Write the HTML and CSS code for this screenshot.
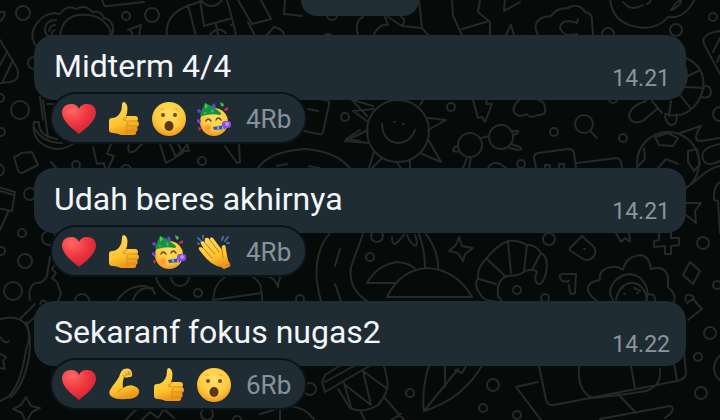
FILE: index.html
```html
<!DOCTYPE html>
<html lang="id">
<head>
<meta charset="utf-8">
<meta name="viewport" content="width=device-width, initial-scale=1">
<title>Chat</title>
<link rel="stylesheet" href="styles.css">
</head>
<body>
<svg class="wallpaper" viewBox="0 0 720 420" preserveAspectRatio="xMidYMid slice" aria-hidden="true">
  <!-- loose bubbles -->
  <g>
    <circle cx="23" cy="13" r="7"/><circle cx="126" cy="16" r="4"/><circle cx="152" cy="15" r="7"/>
    <circle cx="34" cy="63" r="6"/><circle cx="20" cy="110" r="9"/><circle cx="0" cy="98" r="4"/><circle cx="1" cy="132" r="4"/>
    <circle cx="-2" cy="170" r="6"/><circle cx="30" cy="194" r="6"/><circle cx="22" cy="233" r="4"/><circle cx="1" cy="251" r="4"/>
    <circle cx="25" cy="261" r="7"/><circle cx="49" cy="238" r="7"/><circle cx="13" cy="291" r="9"/><circle cx="76" cy="165" r="4"/>
    <circle cx="126" cy="170" r="5"/><circle cx="202" cy="161" r="4"/><circle cx="345" cy="117" r="4"/><circle cx="451" cy="107" r="4"/>
    <circle cx="554" cy="132" r="4"/><circle cx="623" cy="138" r="4"/><circle cx="521" cy="164" r="4"/><circle cx="608" cy="34" r="6"/>
    <circle cx="676" cy="30" r="6"/><circle cx="713" cy="17" r="4"/><circle cx="720" cy="114" r="7"/><circle cx="613" cy="99" r="4"/>
    <circle cx="703" cy="243" r="6"/><circle cx="717" cy="285" r="4"/><circle cx="710" cy="333" r="6"/><circle cx="698" cy="357" r="4"/>
    <circle cx="701" cy="393" r="6"/><circle cx="730" cy="368" r="16"/><circle cx="549" cy="239" r="6"/><circle cx="370" cy="257" r="4"/>
    <circle cx="377" cy="236" r="6"/><circle cx="517" cy="290" r="4"/><circle cx="545" cy="298" r="4"/><circle cx="180" cy="277" r="9"/>
    <circle cx="198" cy="293" r="4"/><circle cx="300" cy="299" r="4"/><circle cx="82" cy="301" r="7"/><circle cx="310" cy="389" r="6"/>
    <circle cx="410" cy="393" r="4"/><circle cx="493" cy="385" r="6"/><circle cx="483" cy="408" r="4"/><circle cx="517" cy="415" r="4"/>
    <circle cx="207" cy="414" r="6"/><circle cx="237" cy="420" r="4"/><circle cx="332" cy="15" r="5"/><circle cx="328" cy="40" r="6"/>
  </g>
  <!-- top strip -->
  <path d="M0 12h5q-1 7-5 9M0 40l17 28q4 12-7 14l-10 1M0 65l7-13M3 81l10-21"/>
  <path d="M36 46q-8-12 2-24 9-11 22-8 7-10 16-5 10-5 16 3 9-2 12 6 12 3 8 18M60 38q1-20 18-23 20-2 28 9 6 6 4 12M56 20q-10 0-11 9 0 8 6 7M49 31q1-6 6-6M52 36q-1-5 3-6"/>
  <path d="M102 0l2 5q1 2 4 1l36-4M128 30l13-5-2 11M133 36l-2-5"/>
  <path d="M167 36q-3-22 23-31l12-4M188 5l8 31M200 0l4 26 28-8-5-18M232 18l4 17M216 24l2 12M200 0q12 12 22 0M210 35q8-10 16-2M231 25h1M238 0l14 24 19-5-10-19M248 22l7 14M266 36l8-9q9 2 10 8M285 0l-1 14 18 2"/>
  <path d="M358 35q-4-14 5-18M385 17l3 8q-8-2-14 9M388 17l14 9q5-7-1-9M402 26l20 2-3-28M422 28l6 7M452 0l1 16 9 19M480 0l-2 12 12 10v13M462 29l27-8M505 0l-1 11 16-9M506 35l5-10 3 10"/>
  <path d="M538 35q-7-13 6-18 8-1 7-1 5-8 17-8 11-6 17 4 8 1 7 10l1 13M577 34q-13 4-17-6 1-9 14-6l3 1 1-4"/>
  <path d="M610-3q1 29 35 31 15-1 23-11 13 2 22-10l5-8M671 10l5-7q7-5 4 1l-6 5zM623 2q8 10 20 3M647 4q4-2 4-5"/>
  <!-- turtle, pizza -->
  <path d="M686 58q20 9 17 31-3 14-14 22-10 7-24 3M678 96q12-14 8-28M688 76l12-6M686 87l18 1M681 96l10 13M671 101l-2 15M652 101l10 12M703 86q8-1 8 6t-10 5M665 116q2 9 7 9t5-11M646 101q-16 5-17 15 2 9 14 5l15-13"/>
  <path d="M720 31q-20 3-16 13l16 30M713 52l7-14M717 62l3-7"/>
  <!-- between first and second message -->
  <path d="M34 122h5q-1 14 18 17M34 122q-3 18 14 25 12 5 25-3M34 127q8 16 28 16M40 97l3 23M43 100l5 38M47 104h8"/>
  <path d="M14 157q6-2 7-4l11-1 6 13-16 8q-3 0-4-3zM51 162l6 7M93 147l4 17 7-1 2 10 8-17-7-2 4-10M129 145q-3 10 6 6l7-7M160 144l6 19 9-5 13-14M170 144l6 13 7-4-5-9M184 151l5 0-2-7M225 146l12 17 3-1-1-18"/>
  <path d="M311 98l15 2q4 1 3 5l-6 27q-1 3-4 2l-15-3M308 109l10 2M258 168q12-17 47-19 30 2 45 19M309 166l10 2M277 166l10-2M360 130l-14 9 14 2"/>
  <circle cx="398" cy="131" r="31"/>
  <path d="M382 124q1 18 16 19 13-1 17-13M394 122h1M403 124h1M367 121l-14-10 21-2M353 100l20 6M368 130l-23 11 24 2M374 152l-5 16M382 158l-10 10M397 163l4 5M410 161v8M420 153l21 9-13-23M428 118l18 2-18 10M420 105l3-5M367 116l-15-16"/>
  <path d="M473 100l5 18 4-1 3 5 7-18h-6l1-4M519 100q-10 10-2 15 5 2 9-1 6 5 11 1 10 1 8-8-1-6-7-7"/>
  <circle cx="470" cy="145" r="12"/><circle cx="501" cy="137" r="12"/>
  <path d="M482 138l7-2M458 146q-5 1-5 5l5 1M467 158l-4 10M471 157l-2 11M513 134q4 2 5-3h-5M511 144l9 3q3 3-2 3l-8-2M488 168q4-7 12-4l6 4"/>
  <circle cx="584" cy="124" r="9"/>
  <path d="M590 131l7 7M536 168l-2-10q0-4 4-5l30-4q5 0 6 4l2 15M577 163l40-5q4 0 5 10M545 168v-3h5v3M559 168v-4h5v4"/>
  <circle cx="668" cy="163" r="31"/>
  <path d="M655 137l4 8 14 1 5-8-10-5zM638 166l7-7-1-11M688 151l9-2 3 15-6 7-6-9zM658 168l8-9 12 5M680 133l21-7q-10 15 0 15l19-3M720 144q-21 4-17 15 3 9 17 2M692 184q16-16 28-18"/>
  <!-- sides of second message -->
  <path d="M-2 187l17 5-3 19-14-3M8 212l-8 18M0 191l14 4"/>
  <path d="M686 203h15l-6 8 1 12-10-8M720 182q-7 4-6 18l4 1 2 32"/>
  <!-- between second and third message -->
  <path d="M30 300q-3-12 5-17 8 1 12-7l3-19q2-1 2 0M56 263l-4 6 4 4-4 5 5 4 4 12-3 7M40 304q2-6 6-2"/>
  <path d="M0 319q18-5 26 6 6 10 0 25-5 35-18 47l-8 4M26 322q6 13 3 35-5 28-18 40M0 337q6 8 9 4M0 354l6 3-3 4 2 8-5-1M20 319l15-15M26 325l10-9"/>
  <path d="M156 277q3 14 24 23M117 301q10-16 28-15 8 2 10 8M133 300q5-14 20-12M213 300q1-16 12-23M213 300l48-7q2-9-8-16M262 293v7M266 276q10 2 12 11 0-12 10-15"/>
  <path d="M329 234q-20 25-8 67M340 249l-5 17M335 284l6 17M363 234q-7 19-12 33-3 22 16 34M367 283q10-18 30-21 14 1 19 8M367 283h30M387 297q13-27 40-29 30 2 45 29zM419 234q6 16 6 34M426 234q13 18 12 35M392 237q0 7 3 7 6-4 9-10M407 235q4 10 9 11 2-4-1-11M459 237l3 9 11 2-8 6-2 7-5-8-9-2 7-6z"/>
  <path d="M481 295q-8-9-3-17-1-10 8-19 11-14 22-18 10-1 19 4 8-1 14 8 8 4 5 20-3 12-8 11-5-4-1-12-2-4-12-1-5 5-18 5-11 4-9 20 6 7 2 6-17-1-19-7zM479 279l17 5M486 258l20 19M508 242l3 31M527 245l-3 25M541 253l-9 17"/>
  <path d="M582 236l-12 12q-1 2 1 3l12 8q6 3 11-3 3-6-1-10zM584 249h1M560 278q-2-5 7-4h9l-1 19q-2 2-5 0l-1-8M560 277q1 6 9 4M616 233l5 9 4-4 5 4-1-9M659 233v7l-5 1v6l11-1v8h6v-8l8-1v-7h-8v-7M690 262l10 9-7 13-10-9zM686 301q-2-7 4-6 5 1 3 5M687 303l6-4 9 10-14 11"/>
  <path d="M597 301q-10-7-9-13 0-6 12-8-2-11 12-13 6-1 11 3 3-14 18-15 8 1 10 14 15-4 17 9v9q11 10 4 17M613 300q-7-10 3-20 11-10 23-3 12 10 7 24M616 300q3-15 14-17 14-1 17 17M620 290l3-3M634 288l6 3M624 294h1M637 293h1M648 294q8 0 7 7"/>
  <!-- below third message -->
  <path d="M26 397l5 9 9 2-8 4-6 11-4-10-9-4 8-4zM126 420q10-13 24-17l6 4M142 420l8-8 8 6 6-9 10 9M280 408q20-6 34 11M260 414l20-6v12"/>
  <path d="M325 375l19-12 36-11 3 6-58 34-3-10zM325 382l54-30M338 389l12 19q13 6 28-3 12-14 9-26-3-18-8-22M344 383l7 24M345 385l26 20-8-34 23 17M384 397l20 23M361 412l4 8M391 420l10-6"/>
  <path d="M430 362q-9 28-6 49 40-12 60-49M424 411l34-42M445 365v22M455 370l7 3 6-10M539 366l7 34q2 6 8 5l123-24q9-2 9-8l-2-21M579 366q-2 26 14 32 36-4 53-7 16-6 14-22M631 366l4 23M673 358l4 22M538 382l-22 5 25 33M618 394l18 19M600 419l70-13q5 1 1 7l-6 5"/>
</svg>

<svg class="sprite" aria-hidden="true">
  <defs>
    <radialGradient id="face" cx=".5" cy=".35" r=".65"><stop offset="0" stop-color="#ffdf67"/><stop offset=".65" stop-color="#ffca3d"/><stop offset="1" stop-color="#ef9725"/></radialGradient>
    <linearGradient id="skin" x1="0" y1="0" x2=".3" y2="1"><stop offset="0" stop-color="#ffd95f"/><stop offset=".7" stop-color="#ffc52f"/><stop offset="1" stop-color="#ec981c"/></linearGradient>
    <radialGradient id="red" cx=".3" cy=".2" r=".9"><stop offset="0" stop-color="#ff6964"/><stop offset=".45" stop-color="#f23b44"/><stop offset="1" stop-color="#cc1e31"/></radialGradient>
    <radialGradient id="blush"><stop offset="0" stop-color="#ff7f35"/><stop offset="1" stop-color="#ff9a35" stop-opacity="0"/></radialGradient>
  </defs>
  <symbol id="heart" viewBox="0 0 34 34">
    <path fill="url(#red)" d="M17 32C14 29 1 21 0 11 0 5 4 2 9 2c4 0 7 2 8 5 1-3 4-5 8-5 5 0 9 3 9 9-1 10-14 18-17 21z"/>
  </symbol>
  <symbol id="thumb" viewBox="0 0 34 34">
    <path fill="url(#skin)" d="M2 19q0-3 3-3 5 0 8-5 2-3 2-8 0-3 2-3 3 1 3.500 6 0 5-1.500 8h9q3 0 3 3 0 2-1 2 2 1 2 3t-2 3q1 1 .5 3t-2 2q1 1 .5 2-.5 1-3 1H14Q9 31 6 31q-4 0-4-3z"/>
    <path fill="none" stroke="#d58b15" stroke-width="1" stroke-linecap="round" d="M22 19h8M21 24h9M21 29h7M20 15q-3 1-4 3 5 0 5 3 0 2-2 3 2 1 1 3 0 2-1 2 1 1 1 2"/>
  </symbol>
  <symbol id="wow" viewBox="0 0 34 34">
    <circle cx="17" cy="17" r="17" fill="url(#face)"/>
    <g fill="#704d16"><circle cx="11" cy="13" r="2"/><circle cx="23" cy="13" r="2"/></g>
    <ellipse cx="17" cy="24" rx="4.500" ry="5" fill="#5c3619"/>
    <path fill="none" stroke="#e5ac38" stroke-linecap="round" d="M8 8q2-2 4-1M22 7q2-1 4 1"/>
  </symbol>
  <symbol id="party" viewBox="0 0 34 34">
    <circle cx="17" cy="20" r="14" fill="url(#face)"/>
    <circle cx="11" cy="26" r="5" fill="url(#blush)"/>
    <path fill="#159044" d="M8 1l7 3 8 6q2 2 0 3-9-2-18 1-3 0-1-4z"/>
    <path fill="#52c653" d="M8 1l3 3-3 3zM14 7l3 2-2 2zM7 10l3 1-3 1z"/>
    <path fill="none" stroke="#714313" stroke-width="1.500" stroke-linecap="round" d="M9 19q2-4 5 0M19 18q2-4 5 0"/>
    <path fill="#3159a5" d="M16 25l12-2v4l-11 1z"/>
    <path fill="#65a8f0" d="M20 24l2-.5v4h-2zM25 23h2v4h-2z"/>
    <rect x="25" y="19" width="9" height="7" rx="3" fill="#8950df"/><circle cx="30" cy="22" r="2" fill="#c08aff"/>
    <path fill="#713fe1" d="M15 3l2-2 2 4-2 2zM0 8l3-1 1 3-3 1zM0 17l4 1-1 4-3-2z"/>
    <path fill="#da2453" d="M27 7l4-2v3l-3 1zM1 25l4 1-3 3z"/>
    <path fill="#34bd56" d="M23 0l4 2-1 3-2-1z"/>
  </symbol>
  <symbol id="clap" viewBox="0 0 34 34">
    <path fill="url(#skin)" d="M4 17q-4-4-1-5 2 0 4 2L4 9q-1-3 1-3 2 0 3 2Q7 3 9 3q2-1 4 2 0-4 3-2l9 12q-1-5 2-5 2 0 2 5l2 10 2 4q1 2-1 3l-5 2-3-2Q14 31 4 17z"/>
    <path fill="none" stroke="#c67e17" stroke-width="1" stroke-linecap="round" d="M7 14l8 9M8 8l10 11M13 5l9 12M25 15l1 8M29 31l4-2"/>
    <path fill="none" stroke="#466c98" stroke-width="2" stroke-linecap="round" d="M1 3l3 3M6 0v3M0 8l2 1M25 5l1-3M28 6l3-4M30 8h2"/>
  </symbol>
  <symbol id="muscle" viewBox="0 0 34 34">
    <path fill="url(#skin)" d="M12 9q2-7 5-8 7-2 8 4 1 4-3 4-3 1-5 0-2 6-1 11 6-4 11-2 6 2 5 7-2 6-13 6-9 1-14-2-4-2-2-7 3-5 5-7 2-3 4-6z"/>
    <path fill="none" stroke="#d08a19" stroke-width="1" stroke-linecap="round" d="M15 21q-3 0-4 3M17 9l-1-2M18 4l2 3M21 3l1 4M23 4l0 3M18 8l3-2"/>
  </symbol>
</svg>

<main class="chat">
  <div class="date-chip"></div>

  <article class="message">
    <div class="bubble"><p class="text">Midterm 4/4</p><time class="time">14.21</time></div>
    <button class="reactions" type="button">
      <svg class="emoji" role="img" aria-label="❤️"><use href="#heart"/></svg>
      <svg class="emoji" role="img" aria-label="👍"><use href="#thumb"/></svg>
      <svg class="emoji" role="img" aria-label="😮"><use href="#wow"/></svg>
      <svg class="emoji" role="img" aria-label="🥳"><use href="#party"/></svg>
      <span class="count">4Rb</span>
    </button>
  </article>

  <article class="message">
    <div class="bubble"><p class="text">Udah beres akhirnya</p><time class="time">14.21</time></div>
    <button class="reactions" type="button">
      <svg class="emoji" role="img" aria-label="❤️"><use href="#heart"/></svg>
      <svg class="emoji" role="img" aria-label="👍"><use href="#thumb"/></svg>
      <svg class="emoji" role="img" aria-label="🥳"><use href="#party"/></svg>
      <svg class="emoji" role="img" aria-label="👏"><use href="#clap"/></svg>
      <span class="count">4Rb</span>
    </button>
  </article>

  <article class="message">
    <div class="bubble"><p class="text">Sekaranf fokus nugas2</p><time class="time">14.22</time></div>
    <button class="reactions" type="button">
      <svg class="emoji" role="img" aria-label="❤️"><use href="#heart"/></svg>
      <svg class="emoji" role="img" aria-label="💪"><use href="#muscle"/></svg>
      <svg class="emoji" role="img" aria-label="👍"><use href="#thumb"/></svg>
      <svg class="emoji" role="img" aria-label="😮"><use href="#wow"/></svg>
      <span class="count">6Rb</span>
    </button>
  </article>
</main>
</body>
</html>
```
FILE: styles.css
```css
* {
  box-sizing: border-box;
}

body {
  margin: 0;
  min-height: 100vh;
  background: #060b09;
  color: #f4f7f9;
  font-family: Roboto, "Liberation Sans", sans-serif;
}

.wallpaper {
  position: absolute;
  inset: 0;
  width: 100%;
  height: 100%;
  fill: none;
  stroke: #262927;
  stroke-width: 2;
  stroke-linecap: round;
  stroke-linejoin: round;
}

.sprite {
  position: absolute;
  width: 0;
  height: 0;
}

.chat {
  position: relative;
  display: flex;
  flex-direction: column;
  padding: 0 34px 8px;
}

.date-chip {
  align-self: center;
  width: 118px;
  height: 16px;
  margin-bottom: 19px;
  border-radius: 0 0 16px 16px;
  background: #212d35;
}

.message {
  display: flex;
  flex-direction: column;
  align-items: flex-start;
}

.message + .message {
  margin-top: 24px;
}

.bubble {
  display: flex;
  align-items: flex-end;
  justify-content: space-between;
  gap: 16px;
  width: 100%;
  padding: 12px 16px 7px 20px;
  border-radius: 20px;
  background: #202c34;
}

.text {
  margin: 0 0 8px;
  font-size: 32px;
  line-height: 38px;
}

.time {
  color: #8b949b;
  font-size: 23px;
  line-height: 28px;
}

.reactions {
  display: flex;
  align-items: center;
  gap: 11px;
  height: 52px;
  margin: -8px 0 0 16px;
  padding: 2px 14px 0 10px;
  border: 2px solid #09131a;
  border-radius: 26px;
  background: #202c34;
  color: #87919a;
  font-family: inherit;
  font-size: 26px;
  line-height: 32px;
}

.emoji {
  width: 34px;
  height: 34px;
}

.count {
  margin-left: 4px;
}
```
